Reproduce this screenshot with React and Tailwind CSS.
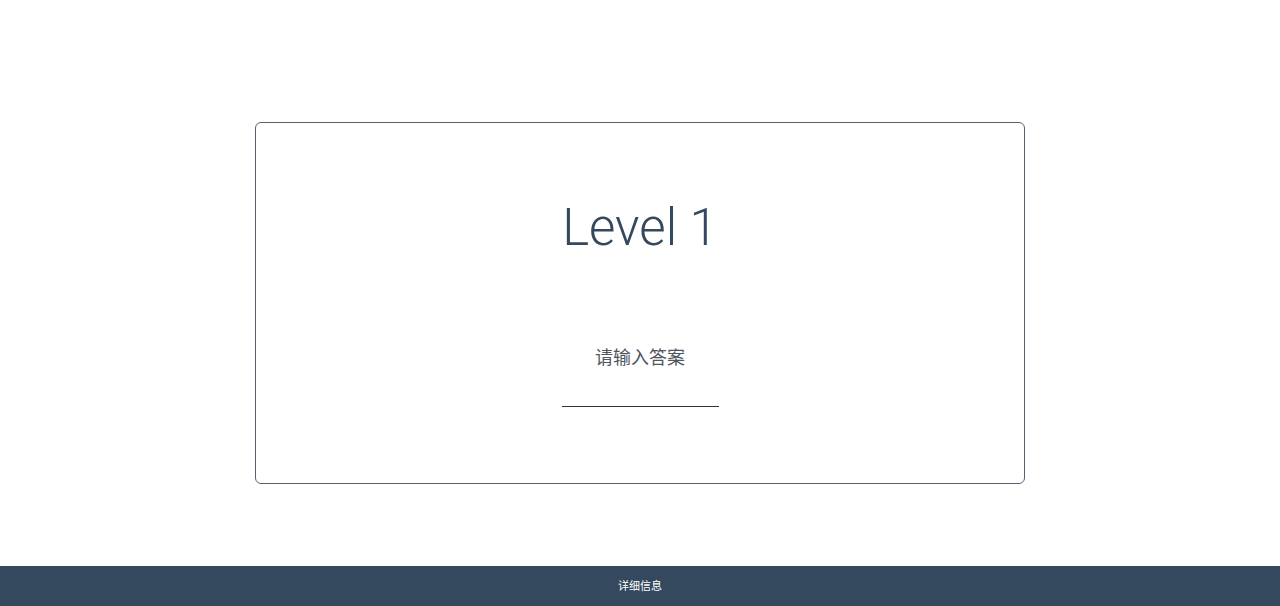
export default function App() {
  return (
    <div className="min-h-screen flex flex-col bg-white font-['Roboto','Noto_Sans_CJK_SC',sans-serif]">
      <main className="flex-1 pt-[122px]">
        <div className="mx-auto w-[770px] h-[362px] rounded-md border border-[#56636f] flex flex-col items-center pt-[79px]">
          <h1 className="text-[51px] leading-none font-light text-[#34495e] h-[51px]">Level 1</h1>
          <label
            htmlFor="answer"
            className="mt-[93px] text-[18px] leading-6 text-[#4f5660]"
          >
            请输入答案
          </label>
          <input
            id="answer"
            type="text"
            className="mt-[7px] w-[157px] h-[30px] border-b border-[#333] bg-transparent outline-none text-center text-[#34495e]"
          />
        </div>
      </main>
      <footer className="h-10 bg-[#34495e] flex items-center justify-center pt-[3px]">
        <span className="text-[11px] text-white">详细信息</span>
      </footer>
    </div>
  );
}
